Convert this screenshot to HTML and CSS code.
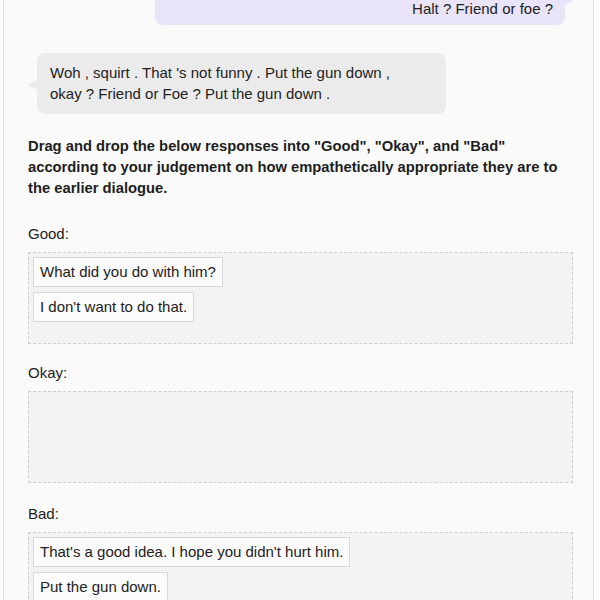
FILE: index.html
```html
<!DOCTYPE html>
<html lang="en">
<head>
  <meta charset="UTF-8" />
  <meta name="viewport" content="width=device-width, initial-scale=1.0" />
  <title>Empathy Rating</title>
  <link rel="stylesheet" href="styles.css">
</head>
<body>
  <div class="panel">
    <div class="chat">
      <div class="bubble bubble-user">Halt ? Friend or foe ?</div>
      <div class="bubble bubble-bot">Woh , squirt . That 's not funny . Put the gun down ,<br>okay ? Friend or Foe ? Put the gun down .</div>
    </div>

    <p class="instructions">Drag and drop the below responses into "Good", "Okay", and "Bad" according to your judgement on how empathetically appropriate they are to the earlier dialogue.</p>

    <div class="group">
      <div class="group-label">Good:</div>
      <div class="dropzone">
        <div class="response">What did you do with him?</div>
        <div class="response">I don't want to do that.</div>
      </div>
    </div>

    <div class="group">
      <div class="group-label">Okay:</div>
      <div class="dropzone"></div>
    </div>

    <div class="group group-last">
      <div class="group-label">Bad:</div>
      <div class="dropzone">
        <div class="response">That's a good idea. I hope you didn't hurt him.</div>
        <div class="response">Put the gun down.</div>
      </div>
    </div>
  </div>
</body>
</html>
```

FILE: styles.css
```css
/* Basic styling */
body {
  margin: 0;
  font-family: "Liberation Sans", Arial, sans-serif;
  background-color: #fcfbfe;
  color: #222;
  overflow: hidden;
}

.panel {
  width: 545px;
  margin-left: 3px;
  margin-top: -14px;
  padding: 0 20px 0 24px;
  background-color: #fafafa;
  border-left: 1px solid #e4ddf2;
  border-right: 1px solid #e2e0e6;
  min-height: 700px;
}

.chat {
  display: flex;
  flex-direction: column;
}

.bubble {
  position: relative;
  font-size: 15px;
  line-height: 21px;
  border-radius: 8px;
}

.bubble-user {
  align-self: flex-end;
  margin-right: 8px;
  width: 386px;
  padding: 12px 12px 6px;
  text-align: right;
  background-color: #e9e4f8;
}

.bubble-user::after {
  content: "";
  position: absolute;
  right: -8px;
  top: 10px;
  border-left: 9px solid #e9e4f8;
  border-top: 5px solid transparent;
  border-bottom: 5px solid transparent;
}

.bubble-bot {
  align-self: flex-start;
  margin-left: 9px;
  margin-top: 28px;
  width: 383px;
  padding: 9px 13px 10px;
  background-color: #ebebeb;
}

.bubble-bot::before {
  content: "";
  position: absolute;
  left: -9px;
  top: 26px;
  border-right: 10px solid #ebebeb;
  border-top: 6px solid transparent;
  border-bottom: 6px solid transparent;
}

.instructions {
  margin: 22px 0 0;
  font-size: 14.75px;
  font-weight: bold;
  line-height: 21px;
  color: #1e1e1e;
}

.group {
  margin-top: 25px;
}

.group + .group {
  margin-top: 19px;
}

.group + .group-last {
  margin-top: 21px;
}

.group-label {
  font-size: 15px;
  line-height: 20px;
  margin-bottom: 8px;
}

.dropzone {
  min-height: 82px;
  padding: 4px;
  border: 1px dashed #cfcfcf;
  background-color: #f3f3f3;
  display: flex;
  flex-direction: column;
  align-items: flex-start;
  gap: 5px;
}

.response {
  font-size: 15px;
  line-height: 28px;
  padding: 0 6px;
  border: 1px solid #d8d8d8;
  background-color: #fbfbfb;
}
```
